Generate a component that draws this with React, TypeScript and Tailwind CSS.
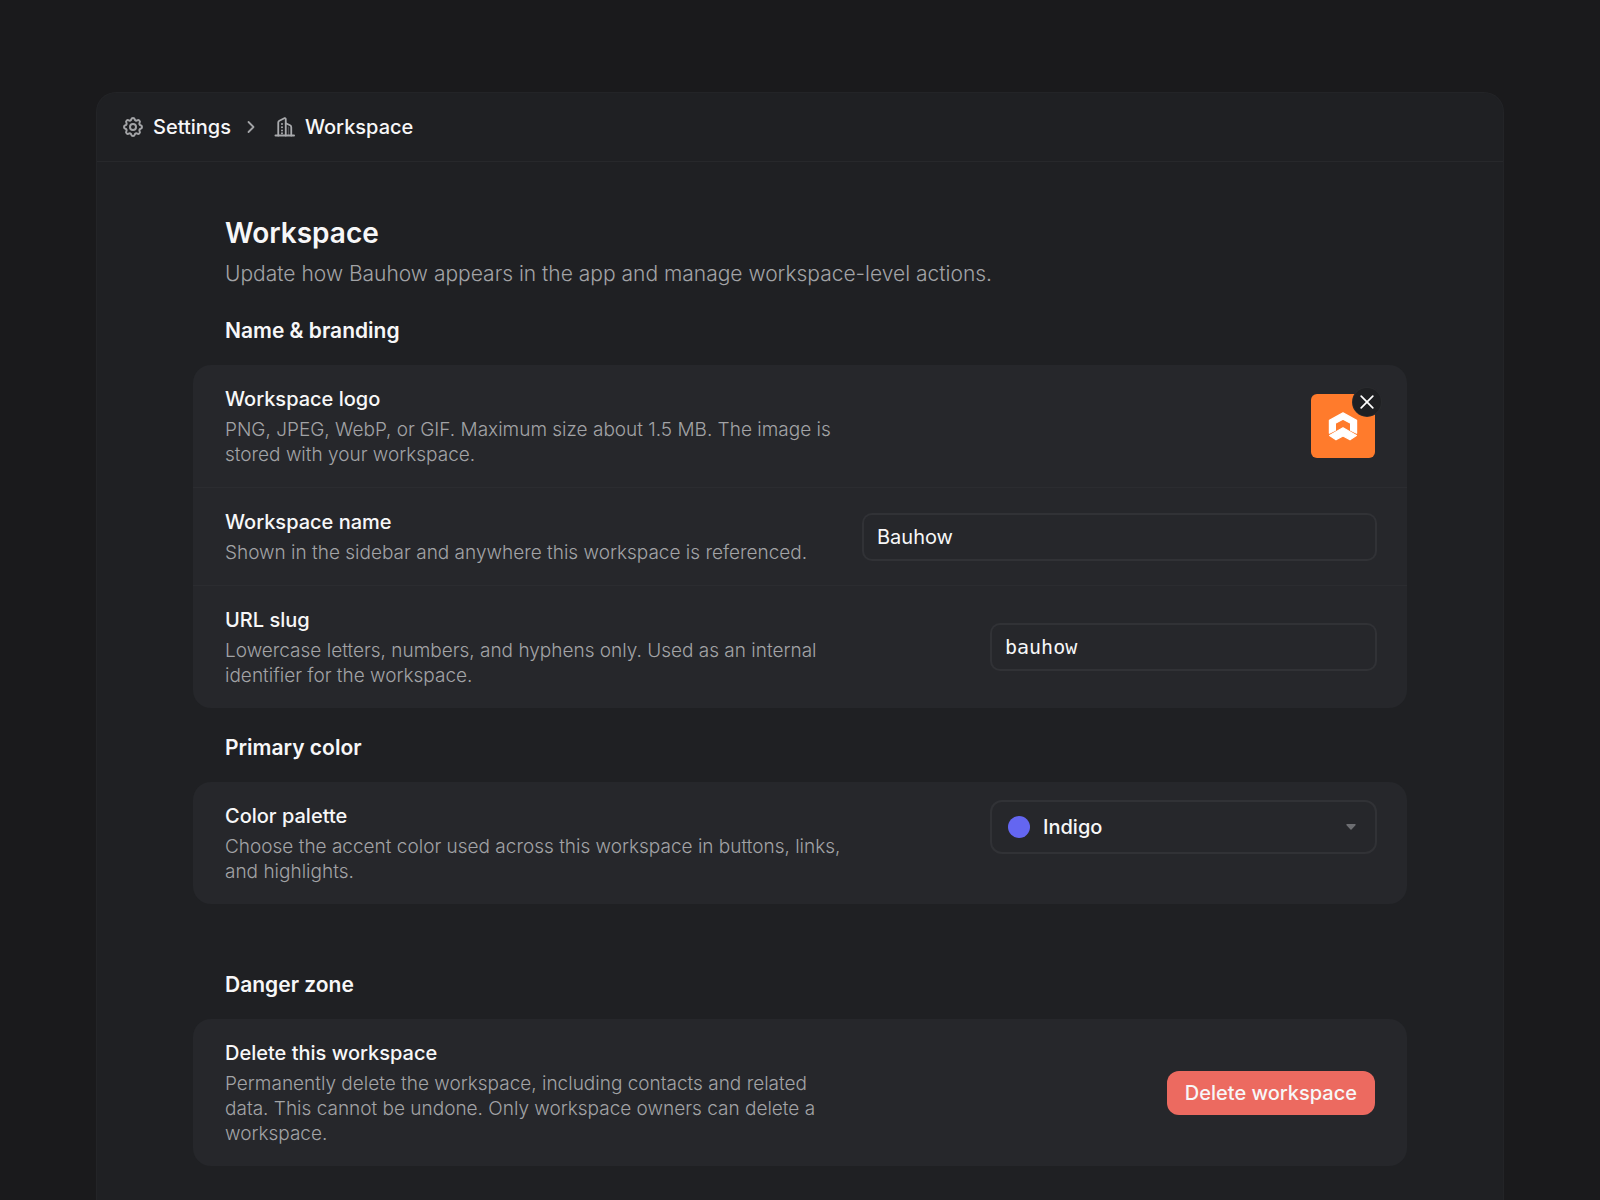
import type { ReactNode } from "react";
import { TbSettings } from "react-icons/tb";

function BuildingIcon() {
  return (
    <svg viewBox="0 0 24 24" className="size-6 text-[#a9aaad]" fill="none" stroke="currentColor" strokeWidth="1.8" strokeLinecap="round" strokeLinejoin="round" aria-hidden="true">
      <path d="M2.5 20.5h18.5" strokeWidth="2" />
      <path d="M5.25 20.5V7.6c0-.8.4-1.4 1.1-1.8l5-2.6c.7-.3 1.4.1 1.4.9v16.4" />
      <path d="M12.75 8.2l4.3 2.1c.8.4 1.2 1 1.2 1.9v8.3" />
      <path d="M9 9v.01M9 12.2v.01M9 15.4v.01M9 18.2v.01" strokeWidth="2" />
      <path d="M15.5 12v8" strokeWidth="1.2" opacity=".35" />
    </svg>
  );
}

function BrandMark() {
  return (
    <svg viewBox="0 0 64 64" className="size-16" aria-hidden="true">
      <g fill="#fff" stroke="#fff" strokeWidth="1.2" strokeLinejoin="round">
        <path d="M32 18.9L45.6 26.4V39.2L39.6 36.2V29.2L32 25.2L24.4 29.2V36.2L18.4 39.2V26.4Z" />
        <path d="M32 33.8L45.4 41.6L39 45.8L32 42L25 45.8L18.6 41.6Z" />
      </g>
    </svg>
  );
}

function Section({ title, className, children }: { title: string; className: string; children: ReactNode }) {
  return (
    <section className={className}>
      <h2 className="px-8 text-[21px] leading-7 font-semibold">{title}</h2>
      <div className="mt-5 divide-y divide-[#2b2c30] rounded-[18px] bg-[#26272b]">{children}</div>
    </section>
  );
}

type RowProps = { title: string; text: string; htmlFor?: string; top?: boolean; children: ReactNode };

function Row({ title, text, htmlFor, top, children }: RowProps) {
  return (
    <div className={`flex justify-between gap-4 px-8 ${top ? "items-start" : "items-center"}`}>
      <div className="max-w-[630px] py-5">
        {htmlFor ? (
          <label htmlFor={htmlFor} className="block text-xl leading-7 font-medium">{title}</label>
        ) : (
          <h3 className="text-xl leading-7 font-medium">{title}</h3>
        )}
        <p className="mt-1 text-[19px] leading-[25px] font-light text-[#a2a3a6]">{text}</p>
      </div>
      {children}
    </div>
  );
}

export default function App() {
  return (
    <div className="flex min-h-screen flex-col bg-[#1a1a1c] px-24 pt-[92px] font-['Inter',sans-serif] text-[#f7f7f8]">
      <div className="flex-1 rounded-t-[20px] border-x border-t border-[#232427] bg-[#1f2023] pb-8">
        <nav aria-label="Breadcrumb" className="flex h-[69px] items-center border-b border-[#27282b] px-6 text-xl leading-7 font-medium">
          <a href="#settings" className="flex items-center gap-2">
            <TbSettings className="size-6 text-[#a3a4a7]" aria-hidden="true" />
            Settings
          </a>
          <svg viewBox="0 0 20 20" className="mx-[10px] size-5 text-[#a3a4a7]" fill="none" stroke="currentColor" strokeWidth="1.8" strokeLinecap="round" strokeLinejoin="round" aria-hidden="true">
            <path d="M7.5 5l5 5-5 5" />
          </svg>
          <a href="#workspace" aria-current="page" className="ml-0.5 flex items-center gap-2">
            <BuildingIcon />
            Workspace
          </a>
        </nav>

        <main className="mx-auto max-w-[1214px] pt-[53px]">
          <header className="px-8">
            <h1 className="text-[28px] leading-9 font-semibold">Workspace</h1>
            <p className="mt-[9px] text-[21px] leading-7 font-light text-[#a2a3a6]">
              Update how Bauhow appears in the app and manage workspace-level actions.
            </p>
          </header>

          <Section title="Name &amp; branding" className="mt-[29px]">
            <Row title="Workspace logo" text="PNG, JPEG, WebP, or GIF. Maximum size about 1.5 MB. The image is stored with your workspace.">
              <div className="relative shrink-0 rounded-md bg-[#ff7b2c]">
                <BrandMark />
                <button type="button" aria-label="Remove logo" className="absolute -top-1.5 -right-1.5 flex size-7 items-center justify-center rounded-full bg-[#1f2023] ring-1 ring-[#2a2b2e]">
                  <svg viewBox="0 0 14 14" className="size-[14px]" fill="none" stroke="#fff" strokeWidth="1.7" strokeLinecap="round" aria-hidden="true">
                    <path d="M1.2 1.2l11.6 11.6M12.8 1.2L1.2 12.8" />
                  </svg>
                </button>
              </div>
            </Row>
            <Row title="Workspace name" text="Shown in the sidebar and anywhere this workspace is referenced." htmlFor="ws-name">
              <input id="ws-name" type="text" defaultValue="Bauhow" className="h-11 w-[511px] rounded-lg bg-transparent px-[13px] text-xl ring-2 ring-[#313236]" />
            </Row>
            <Row title="URL slug" text="Lowercase letters, numbers, and hyphens only. Used as an internal identifier for the workspace." htmlFor="ws-slug">
              <input id="ws-slug" type="text" defaultValue="bauhow" className="h-11 w-[383px] shrink-0 rounded-lg bg-transparent px-[13px] font-['DejaVu_Sans_Mono',monospace] text-xl ring-2 ring-[#313236]" />
            </Row>
          </Section>

          <Section title="Primary color" className="mt-[26px]">
            <Row title="Color palette" text="Choose the accent color used across this workspace in buttons, links, and highlights." htmlFor="ws-color" top>
              <div className="relative mt-5 flex w-[383px] shrink-0 items-center">
                <select id="ws-color" defaultValue="indigo" className="h-[50px] w-full appearance-none rounded-[10px] bg-transparent pl-[51px] text-xl font-medium ring-2 ring-[#313236]">
                  <option value="indigo">Indigo</option>
                </select>
                <span className="pointer-events-none absolute left-4 size-[22px] rounded-full bg-[#6466f1]" />
                <svg viewBox="0 0 12 8" className="pointer-events-none absolute right-[18px] h-2 w-3 text-[#6d6e72]" aria-hidden="true">
                  <path d="M2 1.8H10L6 6Z" fill="currentColor" stroke="currentColor" strokeWidth="1.4" strokeLinejoin="round" />
                </svg>
              </div>
            </Row>
          </Section>

          <Section title="Danger zone" className="mt-[67px]">
            <Row title="Delete this workspace" text="Permanently delete the workspace, including contacts and related data. This cannot be undone. Only workspace owners can delete a workspace.">
              <button type="button" className="h-11 shrink-0 rounded-xl bg-[#ec6a60] px-[18px] text-xl font-medium whitespace-nowrap">
                Delete workspace
              </button>
            </Row>
          </Section>
        </main>
      </div>
    </div>
  );
}
